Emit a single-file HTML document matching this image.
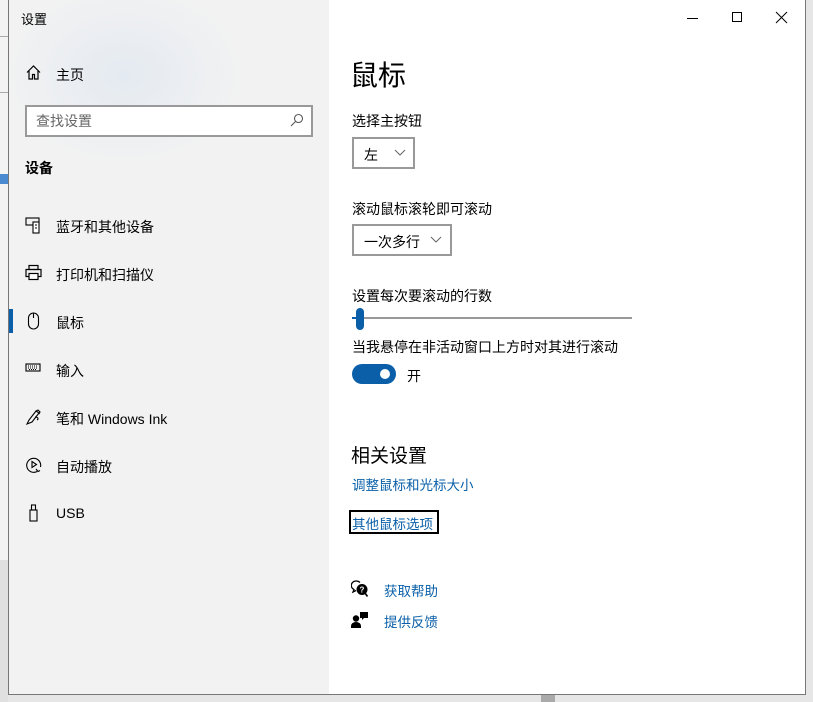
<!DOCTYPE html>
<html><head><meta charset="utf-8"><style>
*{margin:0;padding:0;box-sizing:border-box}
body{width:813px;height:702px;overflow:hidden;background:#e6e6e6;font-family:"Liberation Sans","Noto Sans CJK SC",sans-serif;color:#000;position:relative}
.win{position:absolute;left:8px;top:0;width:798px;height:695px;border:1px solid #777;border-top:none;background:#fff;overflow:hidden}
.side{position:absolute;left:0;top:0;width:320px;height:100%;background:radial-gradient(ellipse 120px 90px at 115px 75px,#e4eaf1,rgba(240,242,245,0) 100%),#f2f2f2}
.t{position:absolute;white-space:nowrap}
.nav{position:absolute;left:0;font-size:14px}
.nav .ic{position:absolute;left:16px;top:-2px}
.nav .tx{position:absolute;left:47px;top:-1px;white-space:nowrap}
.dd{position:absolute;border:2px solid #999;background:#fff;font-size:14px}
.link{color:#0a5fa8;font-size:13.5px}
.c{position:absolute;left:-1px;top:0;width:100%;height:100%}
</style></head><body>
<div style="position:absolute;left:0;top:0;width:8px;height:702px;background:#f3f3f3"></div>
<div style="position:absolute;left:0;top:36px;width:8px;height:1px;background:#aaa"></div>
<div style="position:absolute;left:0;top:92px;width:8px;height:1px;background:#aaa"></div>
<div style="position:absolute;left:0;top:174px;width:8px;height:10px;background:#4a8ad0"></div>
<div style="position:absolute;left:0;top:560px;width:8px;height:142px;background:#e0e0e0"></div>
<div class="win">
 <div class="side">
  <div class="t" style="left:12px;top:9px;font-size:13px">设置</div>
  <div class="nav" style="top:66px"><svg class="ic" width="17" height="17" viewBox="0 0 17 17" fill="none" stroke="#000" stroke-width="1.2"><path d="M2 8.5L8.5 2L15 8.5M4 7v8h3.5v-4.5h2V15H13V7"/></svg><span class="tx">主页</span></div>
  <div style="position:absolute;left:16px;top:105px;width:288px;height:32px;border:2px solid #999;background:#fff"></div>
  <div class="t" style="left:27px;top:111px;font-size:14px;color:#666">查找设置</div>
  <svg style="position:absolute;left:281px;top:113px" width="14" height="14" viewBox="0 0 14 14" fill="none" stroke="#555" stroke-width="1.1"><circle cx="8.5" cy="5.5" r="4"/><path d="M5.5 8.5L1 13"/></svg>
  <div class="t" style="left:16px;top:158px;font-size:14px;font-weight:bold">设备</div>
  <div class="nav" style="top:218px"><svg class="ic" width="18" height="18" viewBox="0 0 18 18" fill="none" stroke="#000" stroke-width="1.1"><rect x="1" y="2" width="13" height="7"/><rect x="8" y="6" width="6" height="11" fill="#fff"/><path d="M10 9h2M10 12h2"/></svg><span class="tx">蓝牙和其他设备</span></div>
  <div class="nav" style="top:266px"><svg class="ic" width="18" height="18" viewBox="0 0 18 18" fill="none" stroke="#000" stroke-width="1.2"><rect x="4" y="1.5" width="9" height="4"/><rect x="1" y="5.5" width="15" height="7"/><rect x="4" y="9.5" width="9" height="6" fill="#fff"/></svg><span class="tx">打印机和扫描仪</span></div>
  <div style="position:absolute;left:0;top:309px;width:4px;height:24px;background:#0a5fa8"></div>
  <div class="nav" style="top:314px"><svg class="ic" width="18" height="18" viewBox="0 0 18 18" fill="none" stroke="#000" stroke-width="1.1"><rect x="3.5" y="1" width="10" height="16" rx="5"/><path d="M8.5 1v5"/></svg><span class="tx">鼠标</span></div>
  <div class="nav" style="top:362px"><svg class="ic" width="18" height="18" viewBox="0 0 18 18" fill="none" stroke="#000" stroke-width="1.1"><rect x="1" y="4" width="14" height="7"/><path d="M3 6h10M3 8h10M4 9.5h8" stroke-dasharray="1 1"/></svg><span class="tx">输入</span></div>
  <div class="nav" style="top:410px"><svg class="ic" width="18" height="18" viewBox="0 0 18 18" fill="none" stroke="#000" stroke-width="1.1"><path d="M2 16l2-4 7-9 3 2-7 9zM11 3l2-1 2 2-1 2M10 9c3 0 4 2 2 3"/></svg><span class="tx">笔和 Windows Ink</span></div>
  <div class="nav" style="top:458px"><svg class="ic" width="18" height="18" viewBox="0 0 18 18" fill="none" stroke="#000" stroke-width="1.1"><path d="M12 15.5A7 7 0 1 1 15.5 11"/><path d="M7 5.5v6l4.5-3z"/><path d="M11 13l2 2.5 2-1"/></svg><span class="tx">自动播放</span></div>
  <div class="nav" style="top:506px"><svg class="ic" width="18" height="18" viewBox="0 0 18 18" fill="none" stroke="#000" stroke-width="1.1"><rect x="5" y="6" width="7" height="11"/><rect x="6.5" y="1" width="4" height="5"/></svg><span class="tx">USB</span></div>
 </div>
 <svg style="position:absolute;left:677px;top:11px" width="14" height="14"><path d="M1 7.5h11" stroke="#000"/></svg>
 <svg style="position:absolute;left:722px;top:11px" width="14" height="14"><rect x="1.5" y="1.5" width="9" height="9" fill="none" stroke="#000"/></svg>
 <svg style="position:absolute;left:766px;top:11px" width="14" height="14"><path d="M1 1l11 11M12 1L1 12" stroke="#000"/></svg>
<div class="c">
 <div class="t" style="left:342px;top:54px;font-size:28px">鼠标</div>
 <div class="t" style="left:344px;top:111px;font-size:14px">选择主按钮</div>
 <div class="dd" style="left:344px;top:137px;width:63px;height:32px"><span class="t" style="left:10px;top:6px">左</span><svg style="position:absolute;left:40px;top:10px" width="12" height="8"><path d="M1 1l5 5 5-5" fill="none" stroke="#666"/></svg></div>
 <div class="t" style="left:344px;top:199px;font-size:14px">滚动鼠标滚轮即可滚动</div>
 <div class="dd" style="left:344px;top:224px;width:100px;height:32px"><span class="t" style="left:10px;top:6px">一次多行</span><svg style="position:absolute;left:76px;top:10px" width="12" height="8"><path d="M1 1l5 5 5-5" fill="none" stroke="#666"/></svg></div>
 <div class="t" style="left:344px;top:286px;font-size:14px">设置每次要滚动的行数</div>
 <div style="position:absolute;left:344px;top:317px;width:280px;height:2px;background:#999"></div>
 <div style="position:absolute;left:344px;top:317px;width:6px;height:2px;background:#0a5fa8"></div>
 <div style="position:absolute;left:348px;top:308px;width:8px;height:22px;border-radius:4px;background:#0a5fa8"></div>
 <div class="t" style="left:344px;top:337px;font-size:14px">当我悬停在非活动窗口上方时对其进行滚动</div>
 <div style="position:absolute;left:344px;top:364px;width:44px;height:20px;border-radius:10px;background:#0a5fa8"></div>
 <div style="position:absolute;left:372px;top:369px;width:10px;height:10px;border-radius:5px;background:#fff"></div>
 <div class="t" style="left:399px;top:366px;font-size:14px">开</div>
 <div class="t" style="left:343px;top:441px;font-size:19px">相关设置</div>
 <div class="t link" style="left:344px;top:474px">调整鼠标和光标大小</div>
 <div style="position:absolute;left:341px;top:510px;width:90px;height:24px;border:2px solid #000"></div>
 <div class="t link" style="left:344px;top:513px">其他鼠标选项</div>
 <svg style="position:absolute;left:343px;top:580px" width="18" height="18" viewBox="0 0 18 18"><path d="M9 2.5A5 4.5 0 1 0 3 9.5L2 12l3-1.5" fill="none" stroke="#000" stroke-width="1.3"/><circle cx="11" cy="9.5" r="5.5"/><text x="11" y="12.5" font-size="8" fill="#fff" text-anchor="middle" font-family="Liberation Sans" font-weight="bold">?</text><path d="M14 13l2.5 3.5" stroke="#000" stroke-width="1.6"/></svg>
 <div class="t link" style="left:376px;top:580px">获取帮助</div>
 <svg style="position:absolute;left:343px;top:611px" width="18" height="18" viewBox="0 0 18 18"><circle cx="5" cy="7.5" r="3.2"/><path d="M0 17v-2a5 4 0 0 1 10 0v2z"/><path d="M9 1h8v6h-4l-2 2V7H9z"/></svg>
 <div class="t link" style="left:376px;top:611px">提供反馈</div>
</div>
</div>
<div style="position:absolute;left:541px;top:695px;width:14px;height:7px;background:#aaa"></div>
</body></html>
